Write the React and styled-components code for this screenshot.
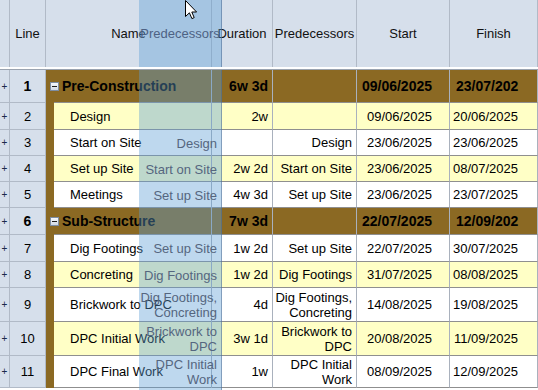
import React from 'react';
import styled, { createGlobalStyle } from 'styled-components';

const COLS = '10px 36px 166px 61px 84px 93px 88px';
const HEAD_BG = '#d6dfeb';
const HEAD_LINE = '#b1bac7';
const GRID_V = '#a9b1bd';
const GRID_H = '#8f8f8f';
const BROWN = '#8b6923';
const YELLOW = '#ffffc6';
const GHOST = 'rgba(92, 157, 212, 0.4)';

const tasks = [
  { line: 1, h: 33, group: true, name: 'Pre-Construction', dur: '6w 3d', pred: '', start: '09/06/2025', finish: '23/07/202' },
  { line: 2, h: 27, name: 'Design', dur: '2w', pred: '', start: '09/06/2025', finish: '20/06/2025' },
  { line: 3, h: 26, name: 'Start on Site', dur: '', pred: 'Design', start: '23/06/2025', finish: '23/06/2025' },
  { line: 4, h: 26, name: 'Set up Site', dur: '2w 2d', pred: 'Start on Site', start: '23/06/2025', finish: '08/07/2025' },
  { line: 5, h: 26, name: 'Meetings', dur: '4w 3d', pred: 'Set up Site', start: '23/06/2025', finish: '23/07/2025' },
  { line: 6, h: 27, group: true, name: 'Sub-Structure', dur: '7w 3d', pred: '', start: '22/07/2025', finish: '12/09/202' },
  { line: 7, h: 27, name: 'Dig Footings', dur: '1w 2d', pred: 'Set up Site', start: '22/07/2025', finish: '30/07/2025' },
  { line: 8, h: 26, name: 'Concreting', dur: '1w 2d', pred: 'Dig Footings', start: '31/07/2025', finish: '08/08/2025' },
  { line: 9, h: 34, name: 'Brickwork to DPC', dur: '4d', pred: 'Dig Footings, Concreting', start: '14/08/2025', finish: '19/08/2025' },
  { line: 10, h: 34, name: 'DPC Initial Work', dur: '3w 1d', pred: 'Brickwork to DPC', start: '20/08/2025', finish: '11/09/2025' },
  { line: 11, h: 32, name: 'DPC Final Work', dur: '1w', pred: 'DPC Initial Work', start: '08/09/2025', finish: '12/09/2025' },
];

const kindOf = (t) => (t.group ? 'group' : t.line % 2 === 0 ? 'even' : 'odd');
const rowBg = (kind) => (kind === 'group' ? BROWN : kind === 'even' ? YELLOW : '#fff');

const GlobalStyle = createGlobalStyle`
  html, body {
    margin: 0;
    background: #fff;
  }
  body {
    font-family: "Liberation Sans", Arial, sans-serif;
    font-size: 13px;
    color: #000;
  }
`;

const Sheet = styled.div`
  position: relative;
  width: 538px;
  height: 390px;
  overflow: hidden;
  background: #fff;
`;

const Header = styled.div`
  display: grid;
  grid-template-columns: ${COLS};
  height: 67px;
  background: ${HEAD_BG};
`;

const HeadCell = styled.div`
  display: flex;
  align-items: center;
  justify-content: center;
  border-right: 1px solid ${HEAD_LINE};
  white-space: nowrap;
  overflow: hidden;
  color: #111;
`;

const Divider = styled.div`
  height: 2px;
  background: #fff;
  border-bottom: 1px solid #9aa3b0;
`;

const Row = styled.div`
  display: grid;
  grid-template-columns: ${COLS};
  height: ${(p) => p.$h}px;
`;

const Expander = styled.div`
  display: flex;
  align-items: center;
  justify-content: center;
  background: ${HEAD_BG};
  border-right: 1px solid ${HEAD_LINE};
  border-bottom: 1px solid ${HEAD_LINE};
  font-size: 10px;
  color: #1b2a4a;
`;

const LineNo = styled.div`
  display: flex;
  align-items: center;
  justify-content: center;
  background: ${HEAD_BG};
  border-right: 1px solid ${HEAD_LINE};
  border-bottom: 1px solid ${HEAD_LINE};
  font-size: ${(p) => (p.$bold ? 14 : 13)}px;
  font-weight: ${(p) => (p.$bold ? 700 : 400)};
`;

const NameCell = styled.div`
  display: flex;
  background: ${BROWN};
  padding-left: 8px;
  border-right: 1px solid ${GRID_V};
`;

const NameInner = styled.div`
  flex: 1;
  display: flex;
  align-items: center;
  background: ${(p) => rowBg(p.$kind)};
  border-bottom: 1px solid ${GRID_H};
  padding-left: ${(p) => (p.$kind === 'group' ? 0 : 16)}px;
  font-size: ${(p) => (p.$kind === 'group' ? 14 : 13)}px;
  font-weight: ${(p) => (p.$kind === 'group' ? 700 : 400)};
  white-space: nowrap;
`;

const MinusBox = styled.span`
  display: flex;
  align-items: center;
  justify-content: center;
  box-sizing: border-box;
  width: 9px;
  height: 9px;
  margin-left: -4px;
  margin-right: 3px;
  border: 1px solid #7d8da3;
  background: linear-gradient(#f5f8fb, #d0d9e5);

  &::before {
    content: '';
    width: 5px;
    height: 1px;
    background: #1d1d1d;
  }
`;

const DataCell = styled.div`
  display: flex;
  align-items: center;
  justify-content: ${(p) => (p.$left ? 'flex-start' : 'flex-end')};
  text-align: right;
  padding: ${(p) => (p.$left ? `0 0 0 ${p.$pad}px` : `0 ${p.$pad}px 0 0`)};
  background: ${(p) => rowBg(p.$kind)};
  border-right: 1px solid ${GRID_V};
  border-bottom: 1px solid ${GRID_H};
  font-size: ${(p) => (p.$kind === 'group' ? 14 : 13)}px;
  font-weight: ${(p) => (p.$kind === 'group' ? 700 : 400)};
  line-height: 15px;
  white-space: ${(p) => (p.$wrap ? 'normal' : 'nowrap')};
  overflow: hidden;
`;

const Ghost = styled.div`
  position: absolute;
  top: 0;
  left: 139px;
  width: 83px;
  height: 390px;
  display: flex;
  flex-direction: column;
`;

const GhostHead = styled.div`
  height: 67px;
  display: flex;
  align-items: center;
  justify-content: center;
  background: ${GHOST};
  border-right: 1px solid rgba(70, 100, 140, 0.5);
  color: #4d6284;
  white-space: nowrap;
`;

const GhostGap = styled.div`
  height: 3px;
`;

const GhostBody = styled.div`
  flex: 1;
  background: ${GHOST};
  border-right: 1px solid rgba(70, 100, 140, 0.5);
`;

const GhostCell = styled.div`
  height: ${(p) => p.$h}px;
  display: flex;
  align-items: center;
  justify-content: flex-end;
  text-align: right;
  padding-right: 4px;
  line-height: 15px;
  color: #55667f;
`;

const Cursor = styled.svg`
  position: absolute;
  top: 0;
  left: 185px;
`;

const TaskRow = ({ t }) => {
  const kind = kindOf(t);
  const bold = kind === 'group';
  return (
    <Row $h={t.h}>
      <Expander>+</Expander>
      <LineNo $bold={bold}>{t.line}</LineNo>
      <NameCell>
        <NameInner $kind={kind}>
          {bold && <MinusBox />}
          {t.name}
        </NameInner>
      </NameCell>
      <DataCell $kind={kind} $pad={4}>{t.dur}</DataCell>
      <DataCell $kind={kind} $pad={4} $wrap>{t.pred}</DataCell>
      <DataCell $kind={kind} $pad={17}>{t.start}</DataCell>
      <DataCell $kind={kind} $pad={bold ? 6 : 19} $left={bold}>{t.finish}</DataCell>
    </Row>
  );
};

export default function App() {
  return (
    <>
      <GlobalStyle />
      <Sheet>
        <Header>
          <HeadCell />
          <HeadCell>Line</HeadCell>
          <HeadCell>Name</HeadCell>
          <HeadCell>Duration</HeadCell>
          <HeadCell>Predecessors</HeadCell>
          <HeadCell>Start</HeadCell>
          <HeadCell>Finish</HeadCell>
        </Header>
        <Divider />
        {tasks.map((t) => (
          <TaskRow key={t.line} t={t} />
        ))}

        <Ghost>
          <GhostHead>Predecessors</GhostHead>
          <GhostGap />
          <GhostBody>
            {tasks.map((t) => (
              <GhostCell key={t.line} $h={t.h}>{t.pred}</GhostCell>
            ))}
          </GhostBody>
        </Ghost>

        <Cursor width="13" height="20" viewBox="0 0 13 20">
          <path
            d="M0.5 0.5 V16.5 L4.4 12.8 L6.9 18.6 L9.2 17.6 L6.8 12 H11.6 Z"
            fill="#fff"
            stroke="#000"
            strokeWidth="1"
            strokeLinejoin="miter"
          />
        </Cursor>
      </Sheet>
    </>
  );
}
